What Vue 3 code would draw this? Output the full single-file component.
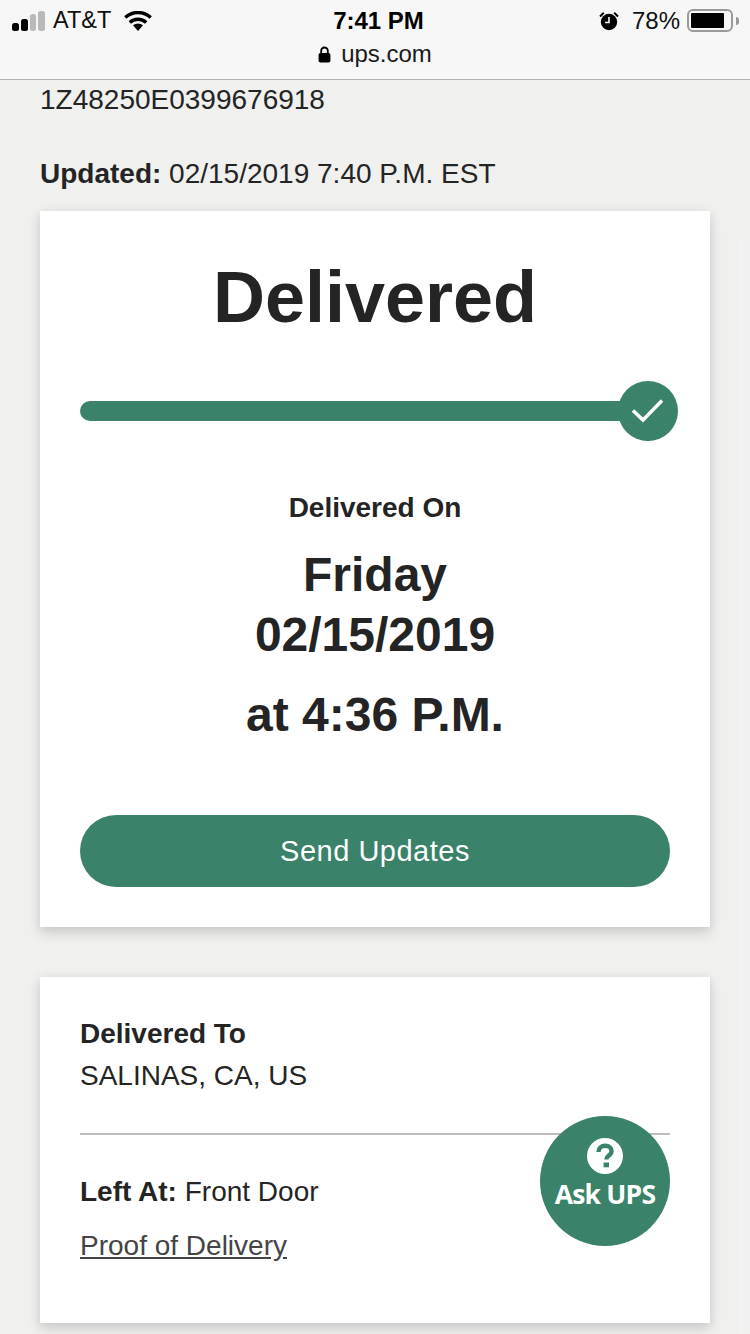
<script setup>
const bars = [8, 12, 17, 20]
</script>

<template>
  <div class="page">
    <header class="top">
      <div class="status">
        <div class="status_left">
          <div class="signal">
            <span v-for="(h, i) in bars" :key="i" class="bar" :class="{ bar_off: i > 1 }" :style="{ height: h + 'px' }"></span>
          </div>
          <span class="carrier">AT&amp;T</span>
          <svg class="wifi" width="28" height="20" viewBox="0 0 28 20">
            <path d="M14 20 9 14.300a7.500 7.500 0 0 1 10 0z" fill="#000"/>
            <path d="M5.800 11.500a12 12 0 0 1 16.400 0" fill="none" stroke="#000" stroke-width="3.400"/>
            <path d="M1.300 6.600a18.500 18.500 0 0 1 25.400 0" fill="none" stroke="#000" stroke-width="3.400"/>
          </svg>
        </div>
        <div class="time">7:41 PM</div>
        <div class="status_right">
          <svg class="alarm" width="20" height="20" viewBox="0 0 20 20">
            <circle cx="10" cy="11" r="8.200" fill="#000"/>
            <path d="M10 6v5.500H6" fill="none" stroke="#f7f7f7" stroke-width="1.600"/>
            <path d="M1 5.500 4.800 1.800M19 5.500 15.200 1.800" stroke="#000" stroke-width="2"/>
          </svg>
          <span class="percent">78%</span>
          <div class="battery">
            <div class="battery_fill"></div>
          </div>
          <span class="battery_tip"></span>
        </div>
      </div>
      <div class="url">
        <svg width="13" height="17" viewBox="0 0 13 17">
          <path d="M3.200 8V4.800a3.300 3.300 0 0 1 6.600 0V8" fill="none" stroke="#000" stroke-width="1.800"/>
          <rect x="0.600" y="7" width="11.800" height="9.600" rx="1.800" fill="#000"/>
        </svg>
        <span>ups.com</span>
      </div>
    </header>

    <main class="content">
      <div class="tracking">1Z48250E0399676918</div>
      <div class="updated"><b>Updated:</b> 02/15/2019 7:40 P.M. EST</div>

      <section class="card card_status">
        <h1 class="title">Delivered</h1>
        <div class="progress">
          <div class="progress_bar"></div>
          <div class="progress_check">
            <svg width="32" height="24" viewBox="0 0 32 24">
              <path d="M1 11.500 11 21 30 1.500" fill="none" stroke="#fff" stroke-width="3.400"/>
            </svg>
          </div>
        </div>
        <div class="on_label">Delivered On</div>
        <div class="on_date">Friday<br>02/15/2019</div>
        <div class="on_time">at 4:36 P.M.</div>
        <button class="send">Send Updates</button>
      </section>

      <section class="card card_info">
        <div class="to_label">Delivered To</div>
        <div class="to_value">SALINAS, CA, US</div>
        <hr class="divider">
        <div class="left_at"><b>Left At:</b> Front Door</div>
        <a class="proof" href="#">Proof of Delivery</a>
      </section>
    </main>

    <div class="scroll_strip"></div>

    <div class="ask">
      <svg width="36" height="36" viewBox="0 0 36 36">
        <circle cx="18" cy="18" r="18" fill="#fff"/>
        <path d="M11.500 14c0-4 2.800-6.200 6.700-6.200 3.800 0 6.300 2.100 6.300 5.400 0 4.400-5.200 4.300-5.200 8.300" fill="none" stroke="#3a8269" stroke-width="4.400"/>
        <rect x="16.600" y="24.500" width="5.400" height="4.800" fill="#3a8269"/>
      </svg>
      <span>Ask UPS</span>
    </div>
  </div>
</template>

<style>
html, body {
  margin: 0;
  background: #f0f0ef;
}
</style>

<style scoped>
.page {
  position: relative;
  width: 750px;
  height: 1334px;
  overflow: hidden;
  background: #f0f0ef;
  font-family: "Liberation Sans", Arial, sans-serif;
  color: #242424;
}

/* Phone status bar and address */
.top {
  height: 79px;
  background: #f7f7f7;
  border-bottom: 1px solid #b4b4b4;
  color: #000;
}

.status {
  display: flex;
  align-items: center;
  justify-content: space-between;
  height: 41px;
  position: relative;
}

.status_left {
  display: flex;
  align-items: center;
  padding-left: 12px;
}

.signal {
  display: flex;
  align-items: flex-end;
  gap: 2px;
  height: 20px;
}

.bar {
  width: 6.750px;
  border-radius: 2.500px;
  background: #000;
}

.bar_off {
  background: #b9b9b9;
}

.carrier {
  margin-left: 8px;
  font-size: 23.500px;
  color: #111;
}

.wifi {
  margin-left: 13px;
}

.time {
  position: absolute;
  left: 7px;
  right: 0;
  text-align: center;
  font-size: 24px;
  font-weight: 700;
  pointer-events: none;
}

.status_right {
  display: flex;
  align-items: center;
  padding-right: 11px;
}

.alarm {
  margin-right: 13px;
}

.percent {
  font-size: 24px;
  color: #111;
  margin-right: 7px;
}

.battery {
  box-sizing: border-box;
  width: 46px;
  height: 23px;
  padding: 2px;
  border: 2px solid #9a9a9a;
  border-radius: 6px;
}

.battery_fill {
  width: 33px;
  height: 15px;
  background: #000;
  border-radius: 1px;
}

.battery_tip {
  width: 3px;
  height: 8px;
  margin-left: 3px;
  background: #9a9a9a;
  border-radius: 0 3px 3px 0;
}

.url {
  display: flex;
  align-items: center;
  justify-content: center;
  gap: 10px;
  height: 26px;
  font-size: 24px;
  color: #1a1a1a;
}

/* Page content */
.content {
  padding: 0 40px;
}

.tracking {
  margin-top: 4px;
  font-size: 28px;
  line-height: 32px;
}

.updated {
  margin-top: 42px;
  font-size: 28px;
  line-height: 32px;
}

.card {
  background: #fff;
  box-shadow: 0 6px 12px rgba(0, 0, 0, 0.14), 0 0 10px rgba(0, 0, 0, 0.06);
}

.card_status {
  margin-top: 21px;
  height: 716px;
  box-sizing: border-box;
  padding: 0 40px;
  text-align: center;
  display: flex;
  flex-direction: column;
}

.title {
  margin: 47px 0 0;
  font-size: 72px;
  line-height: 78px;
  font-weight: 700;
}

.progress {
  position: relative;
  margin-top: 65px;
  height: 20px;
}

.progress_bar {
  height: 20px;
  width: 560px;
  border-radius: 10px;
  background: #3a8269;
}

.progress_check {
  position: absolute;
  left: 538px;
  top: -20px;
  width: 60px;
  height: 60px;
  border-radius: 50%;
  background: #3a8269;
  display: flex;
  align-items: center;
  justify-content: center;
}

.on_label {
  margin-top: 71px;
  font-size: 28px;
  line-height: 32px;
  font-weight: 700;
}

.on_date {
  margin-top: 21px;
  font-size: 48px;
  line-height: 60px;
  font-weight: 700;
}

.on_time {
  margin-top: 20px;
  font-size: 48px;
  line-height: 60px;
  font-weight: 700;
}

.send {
  margin-top: 70px;
  height: 72px;
  border: none;
  border-radius: 36px;
  background: #3a8269;
  color: #fff;
  font-family: inherit;
  font-size: 29px;
  letter-spacing: 0.5px;
}

.card_info {
  margin-top: 50px;
  height: 346px;
  box-sizing: border-box;
  padding: 41px 40px 0;
}

.to_label {
  font-size: 28px;
  line-height: 32px;
  font-weight: 700;
}

.to_value {
  margin-top: 10px;
  font-size: 28px;
  line-height: 32px;
}

.divider {
  margin: 41px 0 0;
  border: none;
  height: 2px;
  background: #bcbcbc;
}

.left_at {
  margin-top: 41px;
  font-size: 28px;
  line-height: 32px;
}

.proof {
  display: inline-block;
  margin-top: 22px;
  font-size: 28px;
  line-height: 32px;
  color: #444;
}

.scroll_strip {
  position: absolute;
  left: 739px;
  top: 238px;
  width: 5px;
  height: 1096px;
  border-radius: 3px;
  background: #f3f3f3;
}

.ask {
  position: absolute;
  left: 540px;
  top: 1116px;
  width: 130px;
  height: 130px;
  border-radius: 50%;
  background: #3a8269;
  color: #fff;
  display: flex;
  flex-direction: column;
  align-items: center;
  box-sizing: border-box;
  padding-top: 22px;
  font-family: "Open Sans", sans-serif;
  font-size: 26.500px;
  font-weight: 700;
  line-height: 32px;
  letter-spacing: -0.8px;
}

.ask span {
  margin-top: 4px;
}
</style>
